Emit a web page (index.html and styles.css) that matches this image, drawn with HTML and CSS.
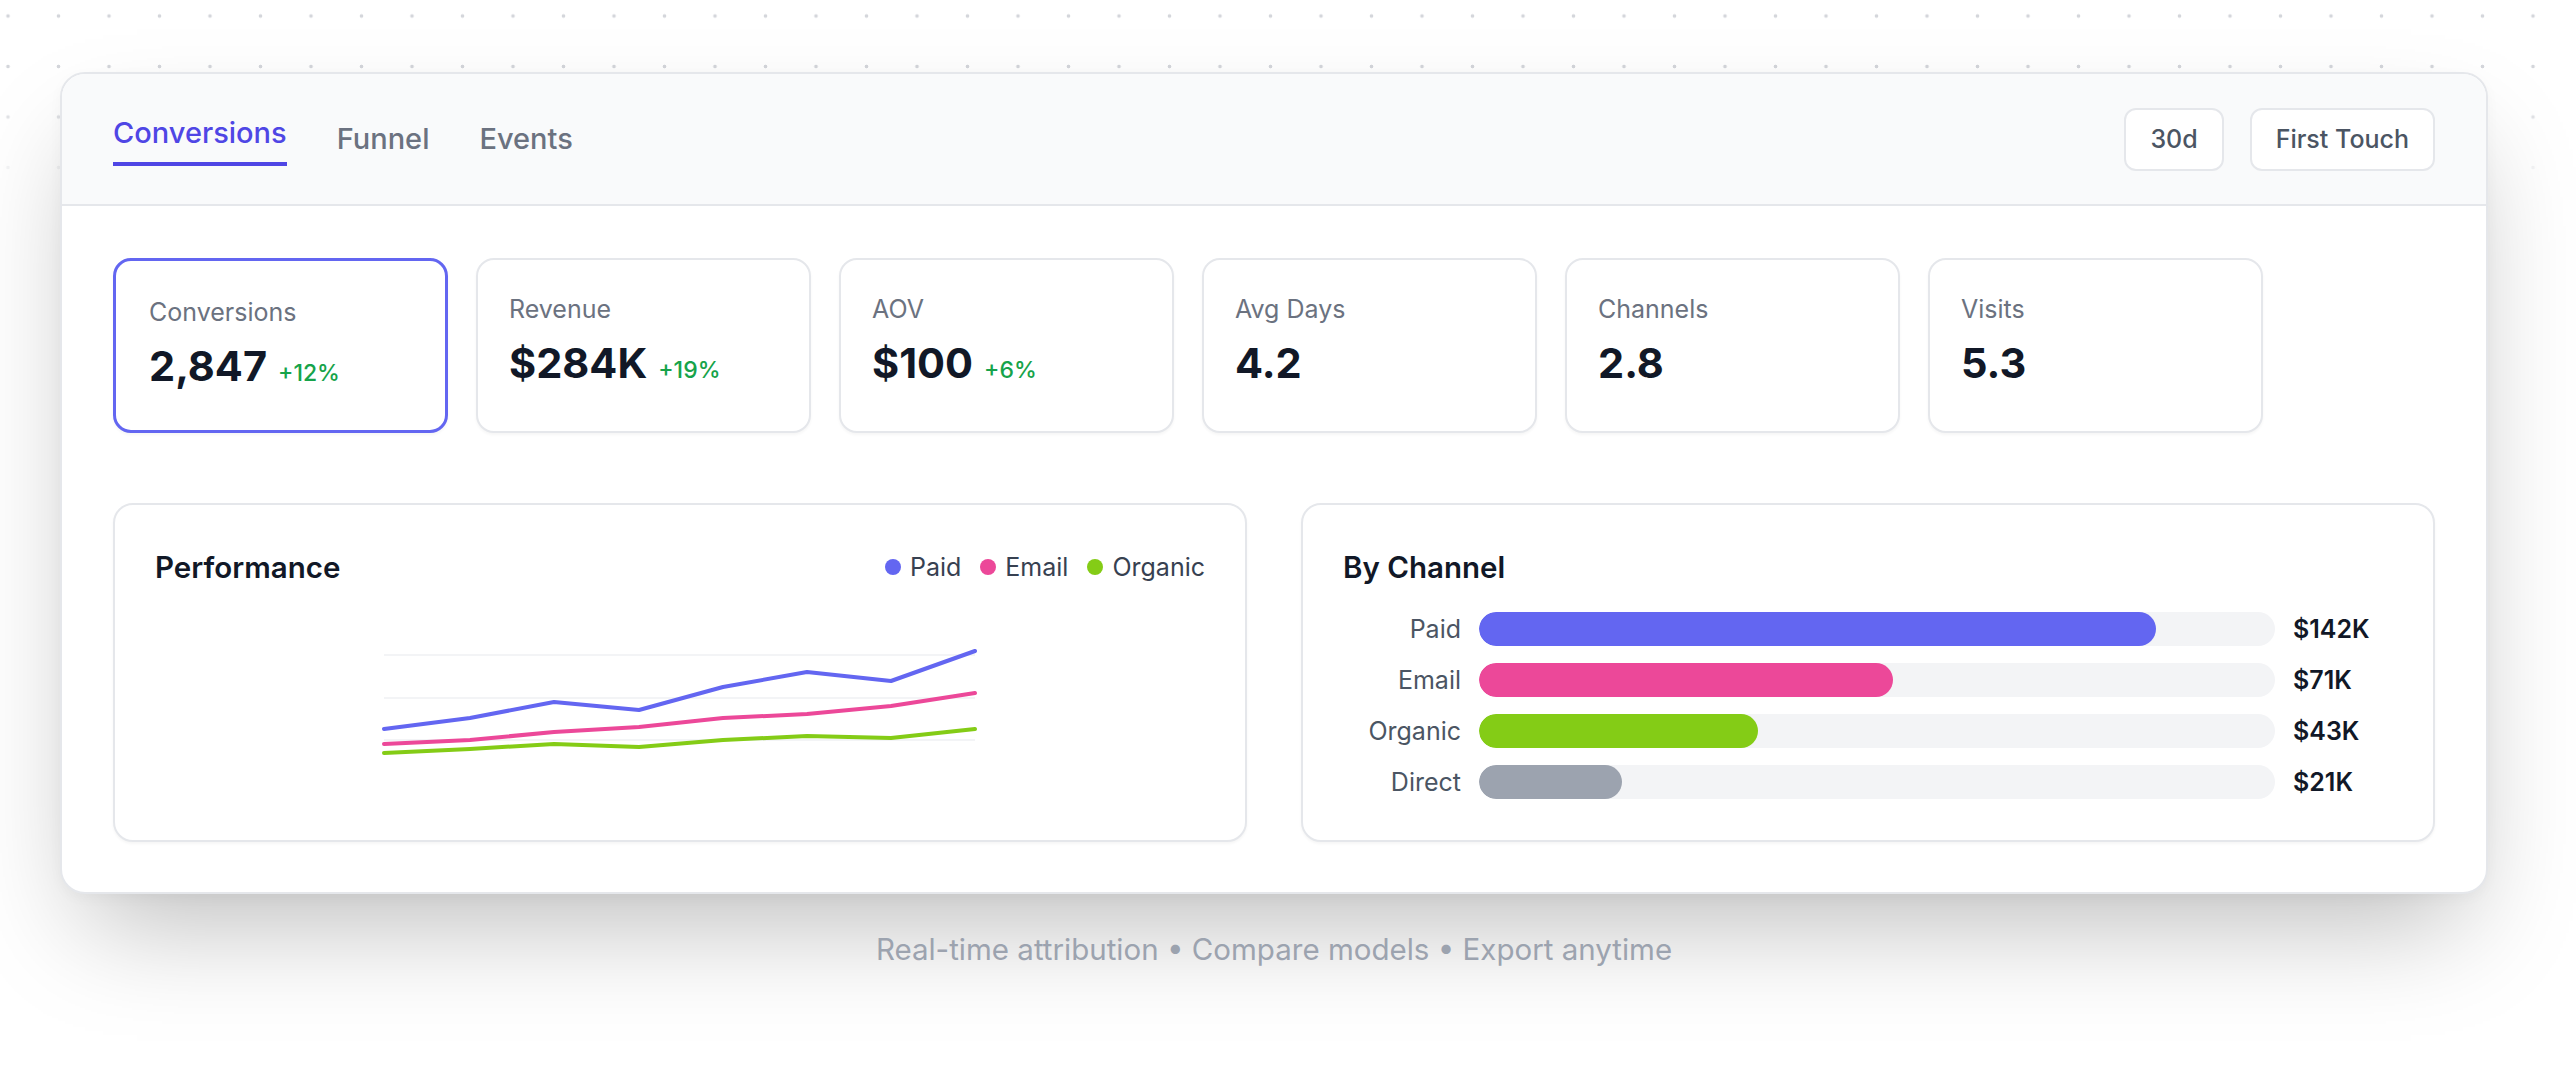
FILE: index.html
```html
<!DOCTYPE html>
<html lang="en">
<head>
<meta charset="utf-8">
<title>Attribution Dashboard</title>
<link rel="stylesheet" href="styles.css">
</head>
<body>
<div class="stage">
  <div class="frame">
    <div class="card">
      <div class="header">
        <nav class="tabs">
          <span class="tab active">Conversions</span>
          <span class="tab">Funnel</span>
          <span class="tab">Events</span>
        </nav>
        <div class="controls">
          <span class="btn">30d</span>
          <span class="btn">First Touch</span>
        </div>
      </div>
      <div class="body">
        <div class="kpis">
          <div class="kpi active">
            <div class="kpi-label">Conversions</div>
            <div class="kpi-row"><span class="kpi-value">2,847</span><span class="kpi-delta">+12%</span></div>
          </div>
          <div class="kpi">
            <div class="kpi-label">Revenue</div>
            <div class="kpi-row"><span class="kpi-value">$284K</span><span class="kpi-delta">+19%</span></div>
          </div>
          <div class="kpi">
            <div class="kpi-label">AOV</div>
            <div class="kpi-row"><span class="kpi-value">$100</span><span class="kpi-delta">+6%</span></div>
          </div>
          <div class="kpi">
            <div class="kpi-label">Avg Days</div>
            <div class="kpi-row"><span class="kpi-value">4.2</span></div>
          </div>
          <div class="kpi">
            <div class="kpi-label">Channels</div>
            <div class="kpi-row"><span class="kpi-value">2.8</span></div>
          </div>
          <div class="kpi">
            <div class="kpi-label">Visits</div>
            <div class="kpi-row"><span class="kpi-value">5.3</span></div>
          </div>
        </div>
        <div class="panels">
          <div class="panel">
            <div class="panel-head">
              <div class="panel-title">Performance</div>
              <div class="legend">
                <span class="legend-item"><span class="dot dot-paid"></span>Paid</span>
                <span class="legend-item"><span class="dot dot-email"></span>Email</span>
                <span class="legend-item"><span class="dot dot-organic"></span>Organic</span>
              </div>
            </div>
            <div class="chart">
              <svg class="chart-svg" width="600" height="180" viewBox="0 0 600 180">
                <line class="grid" x1="4" y1="45" x2="595" y2="45"/>
                <line class="grid" x1="4" y1="88" x2="595" y2="88"/>
                <line class="grid" x1="4" y1="130" x2="595" y2="130"/>
                <polyline class="ln ln-paid" points="4,119 90,108 174,92 259,100 343,77 427,62 511,71 595,41"/>
                <polyline class="ln ln-email" points="4,134 90,130 174,122 259,117 343,108 427,104 511,96 595,83"/>
                <polyline class="ln ln-organic" points="4,143 90,139 174,134 259,137 343,130 427,126 511,128 595,119"/>
              </svg>
            </div>
          </div>
          <div class="panel">
            <div class="panel-head">
              <div class="panel-title">By Channel</div>
            </div>
            <div class="bars">
              <span class="bar-label">Paid</span>
              <span class="track"><span class="fill fill-paid" style="width:85%"></span></span>
              <span class="bar-value">$142K</span>
              <span class="bar-label">Email</span>
              <span class="track"><span class="fill fill-email" style="width:52%"></span></span>
              <span class="bar-value">$71K</span>
              <span class="bar-label">Organic</span>
              <span class="track"><span class="fill fill-organic" style="width:35%"></span></span>
              <span class="bar-value">$43K</span>
              <span class="bar-label">Direct</span>
              <span class="track"><span class="fill fill-direct" style="width:18%"></span></span>
              <span class="bar-value">$21K</span>
            </div>
          </div>
        </div>
      </div>
    </div>
    <p class="caption">Real-time attribution • Compare models • Export anytime</p>
  </div>
</div>
</body>
</html>
```
FILE: styles.css
```css
* { box-sizing: border-box; }

html, body {
  margin: 0;
  padding: 0;
}

body {
  font-family: Inter, "Noto Sans", "Liberation Sans", sans-serif;
  background-color: #ffffff;
  background-image:
    linear-gradient(to bottom, rgba(255,255,255,0) 80px, #ffffff 200px),
    radial-gradient(circle at center, #d4d6db 1.4px, rgba(255,255,255,0) 2.2px);
  background-size: 100% 100%, 50.5px 50.5px;
  background-position: 0 0, -17.25px -9.25px;
  background-repeat: no-repeat, repeat;
  min-height: 1080px;
  color: #111827;
}

.stage {
  padding: 72px 0 0 60px;
}

.frame {
  width: 2428px;
}

.card {
  background: #ffffff;
  border: 2px solid #e5e7eb;
  border-radius: 25px;
  overflow: hidden;
  box-shadow: 0 52px 105px -25px rgba(0, 0, 0, 0.27), 0 4px 14px rgba(0, 0, 0, 0.03);
}

.header {
  height: 132px;
  background: #f9fafb;
  border-bottom: 2px solid #e5e7eb;
  display: flex;
  align-items: center;
  justify-content: space-between;
  padding: 0 51px;
}

.tabs {
  display: flex;
  align-items: center;
  gap: 50px;
}

.tab {
  font-size: 29px;
  font-weight: 500;
  line-height: 42px;
  color: #6b7280;
}

.tab.active {
  color: #4f46e5;
  padding-bottom: 8px;
  border-bottom: 4px solid #4f46e5;
}

.controls {
  display: flex;
  gap: 26px;
}

.btn {
  font-size: 25px;
  font-weight: 500;
  line-height: 37px;
  padding: 11px 24px;
  border: 2px solid #e5e7eb;
  border-radius: 12px;
  background: #ffffff;
  color: #4b5563;
}

.body {
  padding: 52px 51px 50px;
}

.kpis {
  display: flex;
  gap: 28px;
}

.kpi {
  width: 335px;
  height: 175px;
  border: 2px solid #e5e7eb;
  border-radius: 18px;
  padding: 31px;
  background: #ffffff;
  box-shadow: 0 2px 3px rgba(0, 0, 0, 0.04);
}

.kpi.active {
  border: 3px solid #6366f1;
  padding: 33px;
}

.kpi-label {
  font-size: 25px;
  line-height: 36px;
  color: #6b7280;
}

.kpi-row {
  margin-top: 11px;
  display: flex;
  align-items: baseline;
  gap: 11px;
}

.kpi-value {
  font-size: 41.5px;
  font-weight: 700;
  line-height: 50px;
  color: #111827;
}

.kpi-delta {
  font-size: 23px;
  font-weight: 500;
  color: #16a34a;
}

.panels {
  margin-top: 70px;
  display: grid;
  grid-template-columns: 1fr 1fr;
  gap: 54px;
}

.panel {
  height: 339px;
  border: 2px solid #e5e7eb;
  border-radius: 20px;
  padding: 41px 40px;
  background: #ffffff;
  box-shadow: 0 2px 3px rgba(0, 0, 0, 0.04);
}

.panel-head {
  display: flex;
  align-items: center;
  justify-content: space-between;
  height: 42px;
}

.panel-title {
  font-size: 29.5px;
  font-weight: 600;
  line-height: 42px;
  color: #111827;
}

.legend {
  display: flex;
  gap: 19px;
}

.legend-item {
  display: flex;
  align-items: center;
  gap: 9px;
  font-size: 25px;
  line-height: 37px;
  color: #374151;
}

.dot {
  width: 16px;
  height: 16px;
  border-radius: 50%;
}

.dot-paid { background: #6366f1; }
.dot-email { background: #ec4899; }
.dot-organic { background: #84cc16; }

.chart {
  margin-top: 22px;
}

.chart-svg {
  display: block;
  margin: 0 auto;
}

.grid {
  stroke: #f3f4f6;
  stroke-width: 2;
}

.ln {
  fill: none;
  stroke-width: 4;
  stroke-linejoin: round;
  stroke-linecap: round;
}

.ln-paid { stroke: #6366f1; }
.ln-email { stroke: #ec4899; }
.ln-organic { stroke: #84cc16; }

.bars {
  margin-top: 24px;
  display: grid;
  grid-template-columns: 118px 1fr 100px;
  column-gap: 18px;
  row-gap: 17px;
  align-items: center;
}

.bar-label {
  text-align: right;
  font-size: 25px;
  line-height: 34px;
  color: #4b5563;
}

.track {
  display: block;
  height: 34px;
  border-radius: 17px;
  background: #f3f4f6;
  overflow: hidden;
}

.fill {
  display: block;
  height: 100%;
  border-radius: 17px;
}

.fill-paid { background: #6366f1; }
.fill-email { background: #ec4899; }
.fill-organic { background: #84cc16; }
.fill-direct { background: #9ca3af; }

.bar-value {
  font-size: 25px;
  font-weight: 600;
  line-height: 34px;
  color: #111827;
}

.caption {
  margin: 34px 0 0;
  text-align: center;
  font-size: 29.5px;
  line-height: 42px;
  color: #9ca3af;
}
```
